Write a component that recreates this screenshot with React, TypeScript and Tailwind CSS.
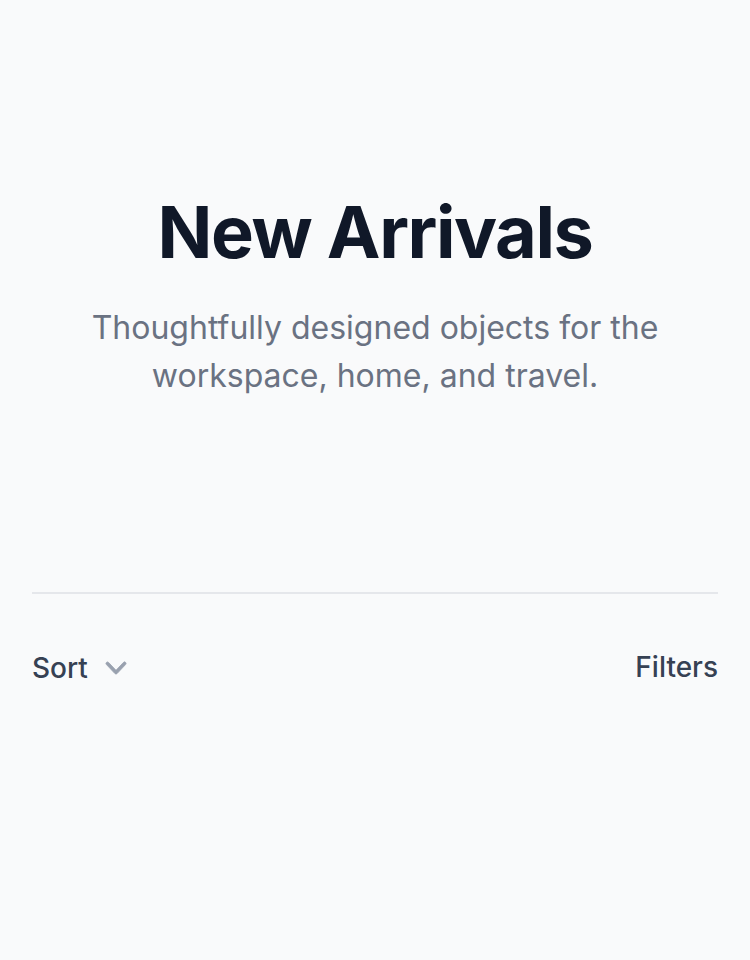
import React from "react";

function ChevronDown({ className }: { className?: string }) {
  return (
    <svg viewBox="0 0 20 20" fill="currentColor" className={className} aria-hidden="true">
      <path
        fillRule="evenodd"
        d="M5.23 7.21a.75.75 0 011.06.02L10 11.168l3.71-3.938a.75.75 0 111.08 1.04l-4.25 4.5a.75.75 0 01-1.08 0l-4.25-4.5a.75.75 0 01.02-1.06z"
        clipRule="evenodd"
        stroke="currentColor"
        strokeWidth="0.4"
      />
    </svg>
  );
}

export default function App() {
  return (
    <div className="min-h-screen bg-gray-50 font-['Inter',sans-serif]">
      <div className="px-8 pt-[192px] pb-[192px] text-center">
        <h1 className="text-[72px] leading-[80px] font-bold tracking-[-0.02em] text-gray-900">
          New Arrivals
        </h1>
        <p className="mx-auto mt-8 max-w-[600px] text-[32px] leading-[48px] text-gray-500">
          Thoughtfully designed objects for the workspace, home, and travel.
        </p>
      </div>

      <section className="mx-8 border-t-2 border-gray-200">
        <div className="flex items-center justify-between pt-[54px] pb-[52px]">
          <button className="inline-flex items-center text-[28px] leading-[40px] font-medium text-gray-700">
            Sort
            <ChevronDown className="-mr-2 ml-2 h-10 w-10 text-gray-400" />
          </button>
          <button className="-mt-0.5 text-[28px] leading-[40px] font-medium text-gray-700">Filters</button>
        </div>
      </section>
    </div>
  );
}
